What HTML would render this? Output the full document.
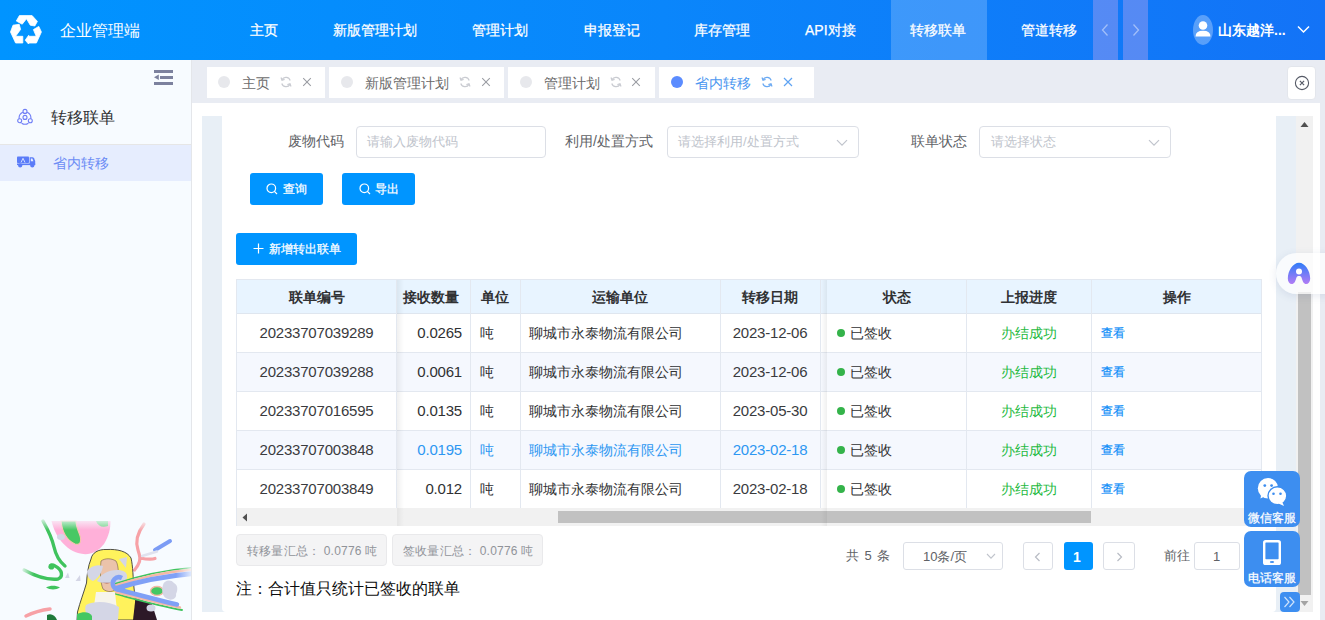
<!DOCTYPE html>
<html><head><meta charset="utf-8">
<style>
*{margin:0;padding:0;box-sizing:border-box}
html,body{width:1325px;height:620px;overflow:hidden;background:#e9ecf3;font-family:"Liberation Sans",sans-serif;color:#303133}
.a{position:absolute}
.t{position:absolute;white-space:nowrap;line-height:1}
#hdr{left:0;top:0;width:1325px;height:60px;background:linear-gradient(90deg,#0094ff 0%,#0a86fb 50%,#1373f7 100%)}
.nav{font-size:14px;color:#fff;top:23px;-webkit-text-stroke:0.25px #fff}
#side{left:0;top:60px;width:192px;height:560px;background:#f7fbff;border-right:1px solid #e4e6ea}
#tabs{left:192px;top:60px;width:1133px;height:43px;background:#e9ecf3}
.tab{position:absolute;top:67px;height:31px;background:#fff}
.tab .dot{position:absolute;top:9px;width:12px;height:12px;border-radius:50%;background:#e7e8ec}
.tab .tx{position:absolute;top:9px;font-size:14px;color:#6b6b6b;line-height:1;white-space:nowrap}
#content{left:192px;top:103px;width:1128px;height:517px;background:#fff}
#wrap{left:202px;top:116px;width:1094px;height:496px;background:#e8eff6}
#card{left:222px;top:116px;width:1054px;height:496px;background:#fff;border-radius:0 0 4px 4px}
.lbl{font-size:14px;color:#606266;top:134px}
.inp{position:absolute;top:126px;height:32px;border:1px solid #dcdfe6;border-radius:4px;background:#fff}
.ph{position:absolute;top:8px;font-size:13px;color:#c0c4cc;line-height:1;white-space:nowrap}
.num{font-size:15px;letter-spacing:-0.2px}
.cj{font-size:14px}
.btn{position:absolute;background:#0095ff;border-radius:3px;color:#fff}
.btn .t{-webkit-text-stroke:0.25px #fff}
</style></head><body>
<!-- HEADER -->
<div id="hdr" class="a">
<svg class="a" style="left:10px;top:14px" width="32" height="30" viewBox="0 0 32 30">
<g fill="#fff" stroke="#fff" stroke-width="0.8" stroke-linejoin="round">
<path d="M9.4 1.6 L22.1 1.6 L27.4 7.4 L24.8 12 L20.3 11.2 L16.5 4.8 L12.2 10.2 L6.3 7 Z"/>
<path d="M3 11.2 L9.2 10.3 L10.6 15.4 L5.6 22.3 L12.8 22.3 L12.8 29 L5.6 29 L0.5 18 Z"/>
<path d="M28.8 12.4 L31.4 18 L26.4 29 L18.7 29 L18.7 30.2 L15.2 26.2 L18.7 21.3 L18.7 22.3 L26.2 22.3 L23.4 15.6 Z"/>
</g>
</svg>
<div class="t" style="left:60px;top:23px;font-size:16px;color:#fff">企业管理端</div>
<div class="a" style="left:891px;top:0;width:96px;height:60px;background:rgba(255,255,255,0.2)"></div>
<div class="t nav" style="left:250px">主页</div>
<div class="t nav" style="left:333px">新版管理计划</div>
<div class="t nav" style="left:472px">管理计划</div>
<div class="t nav" style="left:584px">申报登记</div>
<div class="t nav" style="left:694px">库存管理</div>
<div class="t nav" style="left:805px">API对接</div>
<div class="t nav" style="left:910px">转移联单</div>
<div class="t nav" style="left:1021px">管道转移</div>
<div class="a" style="left:1093px;top:0;width:25px;height:60px;background:rgba(170,160,240,0.45)"></div>
<div class="a" style="left:1123px;top:0;width:25px;height:60px;background:rgba(170,160,240,0.45)"></div>
<svg class="a" style="left:1100px;top:23px" width="10" height="14" viewBox="0 0 10 14"><path d="M7.5 1.5 L2.5 7 L7.5 12.5" fill="none" stroke="rgba(255,255,255,0.45)" stroke-width="1.3"/></svg>
<svg class="a" style="left:1131px;top:23px" width="10" height="14" viewBox="0 0 10 14"><path d="M2.5 1.5 L7.5 7 L2.5 12.5" fill="none" stroke="rgba(255,255,255,0.45)" stroke-width="1.3"/></svg>
<svg class="a" style="left:1193px;top:15px" width="20" height="30" viewBox="0 0 20 30">
<ellipse cx="10" cy="15" rx="10" ry="15" fill="rgba(255,255,255,0.3)"/>
<circle cx="10" cy="10.5" r="4.3" fill="#fff"/>
<path d="M2.5 21.5 Q2.5 15.8 10 15.8 Q17.5 15.8 17.5 21.5 Z" fill="#fff"/>
</svg>
<div class="t" style="left:1218px;top:23px;font-size:14px;color:#fff;font-weight:bold">山东越洋...</div>
<svg class="a" style="left:1297px;top:25px" width="13" height="9" viewBox="0 0 13 9"><path d="M1 1.5 L6.5 7 L12 1.5" fill="none" stroke="#fff" stroke-width="1.5"/></svg>
</div>
<div id="side" class="a"></div>
<svg class="a" style="left:154px;top:69px" width="20" height="17" viewBox="0 0 20 17">
<g fill="#7c819e"><rect x="0" y="1" width="19" height="3"/><rect x="6" y="7" width="13" height="3"/><rect x="0" y="13" width="19" height="3"/><polygon points="0,8.3 4.8,5.6 4.8,11"/></g>
</svg>
<svg class="a" style="left:16px;top:108px" width="18" height="18" viewBox="0 0 18 18">
<g fill="none" stroke="#6f7ef6" stroke-width="1.1">
<path d="M6.8 4.2 A6.3 6.3 0 0 0 3.2 10.8 M11.2 4.2 A6.3 6.3 0 0 1 14.8 10.8 M5.6 15.2 A6.3 6.3 0 0 0 12.4 15.2"/>
<circle cx="9" cy="3.4" r="2"/><circle cx="3.7" cy="12.8" r="2"/><circle cx="14.3" cy="12.8" r="2"/><circle cx="9" cy="9.4" r="2"/>
</g></svg>
<div class="t" style="left:51px;top:110px;font-size:16px;color:#303133">转移联单</div>
<div class="a" style="left:0;top:144px;width:191px;height:1px;background:#e6e6e6"></div>
<div class="a" style="left:0;top:145px;width:191px;height:36px;background:#e6edfe"></div>
<svg class="a" style="left:17px;top:156px" width="19" height="12" viewBox="0 0 19 12">
<g fill="#5b7cf8"><rect x="0" y="0.5" width="12" height="6.5" rx="0.8"/><path d="M12.6 1.2 L15.5 1.2 Q16.5 1.2 17 2.2 L18.2 5 L18.2 8.6 L12.6 8.6 Z"/><rect x="0" y="7.5" width="18.2" height="1.6"/><circle cx="3.2" cy="9.4" r="2.1"/><circle cx="15.3" cy="9.4" r="2.1"/></g>
<path d="M4 6.5 L6 2.3 L8 6.5" fill="none" stroke="#dfe6ff" stroke-width="0.9"/>
<path d="M13.8 2.6 L15.4 2.6 L16.4 5.2 L13.8 5.2 Z" fill="#e6edfe"/>
</svg>
<div class="t" style="left:53px;top:156px;font-size:14px;color:#6c8cf5">省内转移</div>
<div id="tabs" class="a"></div>
<div class="tab" style="left:207px;width:118px"><div class="dot" style="left:11px"></div><div class="tx" style="left:35px">主页</div>
<svg class="a" style="left:73px;top:9px" width="12" height="12" viewBox="0 0 12 12"><path d="M10.2 4.5 A4.5 4.5 0 0 0 2 3.6 M1.8 7.5 A4.5 4.5 0 0 0 10 8.4" fill="none" stroke="#c9cbd1" stroke-width="1.2"/><path d="M1 1.5 L2 4.2 L4.6 3.4 M11 10.5 L10 7.8 L7.4 8.6" fill="none" stroke="#c9cbd1" stroke-width="1.2"/></svg>
<svg class="a" style="left:95px;top:10px" width="10" height="10" viewBox="0 0 10 10"><path d="M1.2 1.2 L8.8 8.8 M8.8 1.2 L1.2 8.8" stroke="#9a9ca2" stroke-width="1.05"/></svg></div>
<div class="tab" style="left:329px;width:175px"><div class="dot" style="left:12px"></div><div class="tx" style="left:36px">新版管理计划</div>
<svg class="a" style="left:130px;top:9px" width="12" height="12" viewBox="0 0 12 12"><path d="M10.2 4.5 A4.5 4.5 0 0 0 2 3.6 M1.8 7.5 A4.5 4.5 0 0 0 10 8.4" fill="none" stroke="#c9cbd1" stroke-width="1.2"/><path d="M1 1.5 L2 4.2 L4.6 3.4 M11 10.5 L10 7.8 L7.4 8.6" fill="none" stroke="#c9cbd1" stroke-width="1.2"/></svg>
<svg class="a" style="left:152px;top:10px" width="10" height="10" viewBox="0 0 10 10"><path d="M1.2 1.2 L8.8 8.8 M8.8 1.2 L1.2 8.8" stroke="#9a9ca2" stroke-width="1.05"/></svg></div>
<div class="tab" style="left:508px;width:147px"><div class="dot" style="left:12px"></div><div class="tx" style="left:36px">管理计划</div>
<svg class="a" style="left:102px;top:9px" width="12" height="12" viewBox="0 0 12 12"><path d="M10.2 4.5 A4.5 4.5 0 0 0 2 3.6 M1.8 7.5 A4.5 4.5 0 0 0 10 8.4" fill="none" stroke="#c9cbd1" stroke-width="1.2"/><path d="M1 1.5 L2 4.2 L4.6 3.4 M11 10.5 L10 7.8 L7.4 8.6" fill="none" stroke="#c9cbd1" stroke-width="1.2"/></svg>
<svg class="a" style="left:123px;top:10px" width="10" height="10" viewBox="0 0 10 10"><path d="M1.2 1.2 L8.8 8.8 M8.8 1.2 L1.2 8.8" stroke="#9a9ca2" stroke-width="1.05"/></svg></div>
<div class="tab" style="left:659px;width:155px"><div class="dot" style="left:12px;background:#5b8cff"></div><div class="tx" style="left:36px;color:#4c97f0">省内转移</div>
<svg class="a" style="left:102px;top:9px" width="12" height="12" viewBox="0 0 12 12"><path d="M10.2 4.5 A4.5 4.5 0 0 0 2 3.6 M1.8 7.5 A4.5 4.5 0 0 0 10 8.4" fill="none" stroke="#6aa9f2" stroke-width="1.2"/><path d="M1 1.5 L2 4.2 L4.6 3.4 M11 10.5 L10 7.8 L7.4 8.6" fill="none" stroke="#6aa9f2" stroke-width="1.2"/></svg>
<svg class="a" style="left:124px;top:10px" width="10" height="10" viewBox="0 0 10 10"><path d="M1 1 L9 9 M9 1 L1 9" stroke="#5ea3f3" stroke-width="1.2"/></svg></div>
<div class="a" style="left:1287px;top:66px;width:29px;height:34px;background:#fff;border-radius:4px;border:1px solid #e3e6ec"></div>
<svg class="a" style="left:1294px;top:75px" width="16" height="16" viewBox="0 0 16 16"><circle cx="8" cy="8" r="6.6" fill="none" stroke="#555a66" stroke-width="1.1"/><path d="M5.9 5.9 L10.1 10.1 M10.1 5.9 L5.9 10.1" stroke="#555a66" stroke-width="1.2"/></svg>
<div id="content" class="a"></div>
<div id="wrap" class="a"></div>
<div id="card" class="a"></div>
<div class="t lbl" style="left:288px">废物代码</div>
<div class="inp" style="left:356px;width:190px"><div class="ph" style="left:10px">请输入废物代码</div></div>
<div class="t lbl" style="left:565px">利用/处置方式</div>
<div class="inp" style="left:667px;width:192px"><div class="ph" style="left:10px">请选择利用/处置方式</div>
<svg class="a" style="left:168px;top:12px" width="12" height="8" viewBox="0 0 12 8"><path d="M1 1.2 L6 6.2 L11 1.2" fill="none" stroke="#c0c4cc" stroke-width="1.2"/></svg></div>
<div class="t lbl" style="left:911px">联单状态</div>
<div class="inp" style="left:979px;width:192px"><div class="ph" style="left:11px">请选择状态</div>
<svg class="a" style="left:168px;top:12px" width="12" height="8" viewBox="0 0 12 8"><path d="M1 1.2 L6 6.2 L11 1.2" fill="none" stroke="#c0c4cc" stroke-width="1.2"/></svg></div>
<div class="btn" style="left:250px;top:173px;width:73px;height:32px"><svg class="a" style="left:16px;top:10px" width="12" height="12" viewBox="0 0 12 12"><circle cx="5.3" cy="5.3" r="4.3" fill="none" stroke="#fff" stroke-width="1.2"/><path d="M8.4 8.4 L11 11" stroke="#fff" stroke-width="1.2"/></svg><div class="t" style="left:33px;top:10px;font-size:12px">查询</div></div>
<div class="btn" style="left:342px;top:173px;width:73px;height:32px"><svg class="a" style="left:17px;top:10px" width="12" height="12" viewBox="0 0 12 12"><circle cx="5.3" cy="5.3" r="4.3" fill="none" stroke="#fff" stroke-width="1.2"/><path d="M8.4 8.4 L11 11" stroke="#fff" stroke-width="1.2"/></svg><div class="t" style="left:33px;top:10px;font-size:12px">导出</div></div>
<div class="btn" style="left:236px;top:233px;width:121px;height:32px"><svg class="a" style="left:17px;top:10px" width="11" height="11" viewBox="0 0 11 11"><path d="M5.5 0.5 L5.5 10.5 M0.5 5.5 L10.5 5.5" stroke="#fff" stroke-width="1.2"/></svg><div class="t" style="left:33px;top:10px;font-size:12px">新增转出联单</div></div>
<!-- TABLE -->
<div class="a" style="left:236px;top:279px;width:1026px;height:247px;background:#fff;border:1px solid #e3e8f0;border-bottom:none"></div>
<div class="a" style="left:237px;top:280px;width:1024px;height:33px;background:#e8f4ff"></div>
<div class="a" style="left:237px;top:313px;width:1024px;height:1px;background:#dfe6ef"></div>
<div class="a" style="left:237px;top:352px;width:1024px;height:1px;background:#e3e8f0"></div>
<div class="a" style="left:237px;top:353px;width:1024px;height:38px;background:#f5f8fe"></div>
<div class="a" style="left:237px;top:391px;width:1024px;height:1px;background:#e3e8f0"></div>
<div class="a" style="left:237px;top:430px;width:1024px;height:1px;background:#e3e8f0"></div>
<div class="a" style="left:237px;top:431px;width:1024px;height:38px;background:#f5f8fe"></div>
<div class="a" style="left:237px;top:469px;width:1024px;height:1px;background:#e3e8f0"></div>
<div class="a" style="left:237px;top:508px;width:1024px;height:1px;background:#e3e8f0"></div>
<div class="a" style="left:396px;top:280px;width:1px;height:228px;background:#e3e8f0"></div>
<div class="a" style="left:470px;top:280px;width:1px;height:228px;background:#e3e8f0"></div>
<div class="a" style="left:520px;top:280px;width:1px;height:228px;background:#e3e8f0"></div>
<div class="a" style="left:720px;top:280px;width:1px;height:228px;background:#e3e8f0"></div>
<div class="a" style="left:820px;top:280px;width:1px;height:228px;background:#e3e8f0"></div>
<div class="a" style="left:966px;top:280px;width:1px;height:228px;background:#e3e8f0"></div>
<div class="a" style="left:1091px;top:280px;width:1px;height:228px;background:#e3e8f0"></div>
<div class="a" style="left:397px;top:280px;width:7px;height:246px;background:linear-gradient(90deg,rgba(0,0,0,0.06),rgba(0,0,0,0))"></div>
<div class="a" style="left:821px;top:280px;width:6px;height:246px;background:linear-gradient(90deg,rgba(0,0,0,0),rgba(0,0,0,0.06))"></div>
<div class="t" style="font-size:14px;font-weight:bold;color:#303133;top:290px;left:316.5px;transform:translateX(-50%)">联单编号</div>
<div class="t" style="font-size:14px;font-weight:bold;color:#303133;top:290px;left:403px">接收数量</div>
<div class="t" style="font-size:14px;font-weight:bold;color:#303133;top:290px;left:481px">单位</div>
<div class="t" style="font-size:14px;font-weight:bold;color:#303133;top:290px;left:620px;transform:translateX(-50%)">运输单位</div>
<div class="t" style="font-size:14px;font-weight:bold;color:#303133;top:290px;left:770px;transform:translateX(-50%)">转移日期</div>
<div class="t" style="font-size:14px;font-weight:bold;color:#303133;top:290px;left:896.5px;transform:translateX(-50%)">状态</div>
<div class="t" style="font-size:14px;font-weight:bold;color:#303133;top:290px;left:1028.5px;transform:translateX(-50%)">上报进度</div>
<div class="t" style="font-size:14px;font-weight:bold;color:#303133;top:290px;left:1176.5px;transform:translateX(-50%)">操作</div>
<div class="t num" style="left:316.5px;top:325px;transform:translateX(-50%);color:#3a3b3e">20233707039289</div>
<div class="t num" style="right:863px;top:325px;color:#303133">0.0265</div>
<div class="t cj" style="left:480px;top:326px;color:#303133">吨</div>
<div class="t cj" style="left:529px;top:326px;color:#303133">聊城市永泰物流有限公司</div>
<div class="t num" style="left:770px;top:325px;transform:translateX(-50%);color:#3a3b3e">2023-12-06</div>
<div class="a" style="left:837px;top:329px;width:8px;height:8px;border-radius:50%;background:#34b34a"></div>
<div class="t cj" style="left:850px;top:326px;color:#303133">已签收</div>
<div class="t cj" style="left:1001px;top:326px;color:#1fba42">办结成功</div>
<div class="t" style="left:1101px;top:327px;font-size:12px;color:#0a8cf8;-webkit-text-stroke:0.2px #0a8cf8">查看</div>
<div class="t num" style="left:316.5px;top:364px;transform:translateX(-50%);color:#3a3b3e">20233707039288</div>
<div class="t num" style="right:863px;top:364px;color:#303133">0.0061</div>
<div class="t cj" style="left:480px;top:365px;color:#303133">吨</div>
<div class="t cj" style="left:529px;top:365px;color:#303133">聊城市永泰物流有限公司</div>
<div class="t num" style="left:770px;top:364px;transform:translateX(-50%);color:#3a3b3e">2023-12-06</div>
<div class="a" style="left:837px;top:368px;width:8px;height:8px;border-radius:50%;background:#34b34a"></div>
<div class="t cj" style="left:850px;top:365px;color:#303133">已签收</div>
<div class="t cj" style="left:1001px;top:365px;color:#1fba42">办结成功</div>
<div class="t" style="left:1101px;top:366px;font-size:12px;color:#0a8cf8;-webkit-text-stroke:0.2px #0a8cf8">查看</div>
<div class="t num" style="left:316.5px;top:403px;transform:translateX(-50%);color:#3a3b3e">20233707016595</div>
<div class="t num" style="right:863px;top:403px;color:#303133">0.0135</div>
<div class="t cj" style="left:480px;top:404px;color:#303133">吨</div>
<div class="t cj" style="left:529px;top:404px;color:#303133">聊城市永泰物流有限公司</div>
<div class="t num" style="left:770px;top:403px;transform:translateX(-50%);color:#3a3b3e">2023-05-30</div>
<div class="a" style="left:837px;top:407px;width:8px;height:8px;border-radius:50%;background:#34b34a"></div>
<div class="t cj" style="left:850px;top:404px;color:#303133">已签收</div>
<div class="t cj" style="left:1001px;top:404px;color:#1fba42">办结成功</div>
<div class="t" style="left:1101px;top:405px;font-size:12px;color:#0a8cf8;-webkit-text-stroke:0.2px #0a8cf8">查看</div>
<div class="t num" style="left:316.5px;top:442px;transform:translateX(-50%);color:#3a3b3e">20233707003848</div>
<div class="t num" style="right:863px;top:442px;color:#2d97f2">0.0195</div>
<div class="t cj" style="left:480px;top:443px;color:#2d97f2">吨</div>
<div class="t cj" style="left:529px;top:443px;color:#2d97f2">聊城市永泰物流有限公司</div>
<div class="t num" style="left:770px;top:442px;transform:translateX(-50%);color:#2d97f2">2023-02-18</div>
<div class="a" style="left:837px;top:446px;width:8px;height:8px;border-radius:50%;background:#34b34a"></div>
<div class="t cj" style="left:850px;top:443px;color:#303133">已签收</div>
<div class="t cj" style="left:1001px;top:443px;color:#1fba42">办结成功</div>
<div class="t" style="left:1101px;top:444px;font-size:12px;color:#0a8cf8;-webkit-text-stroke:0.2px #0a8cf8">查看</div>
<div class="t num" style="left:316.5px;top:481px;transform:translateX(-50%);color:#3a3b3e">20233707003849</div>
<div class="t num" style="right:863px;top:481px;color:#303133">0.012</div>
<div class="t cj" style="left:480px;top:482px;color:#303133">吨</div>
<div class="t cj" style="left:529px;top:482px;color:#303133">聊城市永泰物流有限公司</div>
<div class="t num" style="left:770px;top:481px;transform:translateX(-50%);color:#3a3b3e">2023-02-18</div>
<div class="a" style="left:837px;top:485px;width:8px;height:8px;border-radius:50%;background:#34b34a"></div>
<div class="t cj" style="left:850px;top:482px;color:#303133">已签收</div>
<div class="t cj" style="left:1001px;top:482px;color:#1fba42">办结成功</div>
<div class="t" style="left:1101px;top:483px;font-size:12px;color:#0a8cf8;-webkit-text-stroke:0.2px #0a8cf8">查看</div>
<div class="a" style="left:237px;top:508px;width:1024px;height:18px;background:#f1f1f1"></div>
<div class="a" style="left:558px;top:511px;width:533px;height:12px;background:#c1c1c1"></div>
<svg class="a" style="left:242px;top:513px" width="6" height="9" viewBox="0 0 6 9"><polygon points="5,0.5 0.5,4.5 5,8.5" fill="#505050"/></svg>
<div class="a" style="left:397px;top:508px;width:7px;height:18px;background:linear-gradient(90deg,rgba(0,0,0,0.05),rgba(0,0,0,0))"></div>
<div class="a" style="left:821px;top:508px;width:6px;height:18px;background:linear-gradient(90deg,rgba(0,0,0,0),rgba(0,0,0,0.05))"></div>
<!-- /TABLE -->
<!-- FOOT -->
<div class="a" style="left:236px;top:534px;width:151px;height:32px;background:#f4f4f5;border:1px solid #e9e9eb;border-radius:4px"></div>
<div class="t" style="left:247px;top:545px;font-size:12px;letter-spacing:0.2px;color:#909399">转移量汇总： 0.0776 吨</div>
<div class="a" style="left:392px;top:534px;width:151px;height:32px;background:#f4f4f5;border:1px solid #e9e9eb;border-radius:4px"></div>
<div class="t" style="left:403px;top:545px;font-size:12px;letter-spacing:0.2px;color:#909399">签收量汇总： 0.0776 吨</div>
<div class="t" style="left:236px;top:581px;font-size:16px;color:#0d0d0d">注：合计值只统计已签收的联单</div>
<div class="t" style="left:846px;top:549px;font-size:13px;word-spacing:2px;color:#606266">共 5 条</div>
<div class="a" style="left:903px;top:542px;width:100px;height:28px;border:1px solid #dcdfe6;border-radius:3px;background:#fff"></div>
<div class="t" style="left:923px;top:550px;font-size:13px;color:#606266">10条/页</div>
<svg class="a" style="left:986px;top:553px" width="10" height="7" viewBox="0 0 10 7"><path d="M1 1 L5 5.2 L9 1" fill="none" stroke="#c0c4cc" stroke-width="1.1"/></svg>
<div class="a" style="left:1023px;top:542px;width:30px;height:28px;border:1px solid #dcdfe6;border-radius:3px;background:#fff"></div>
<svg class="a" style="left:1034px;top:552px" width="7" height="10" viewBox="0 0 7 10"><path d="M5.5 1 L1.5 5 L5.5 9" fill="none" stroke="#b8bcc4" stroke-width="1.2"/></svg>
<div class="a" style="left:1064px;top:542px;width:29px;height:28px;border-radius:3px;background:#0095ff"></div>
<div class="t" style="left:1073px;top:550px;font-size:14px;font-weight:bold;color:#fff">1</div>
<div class="a" style="left:1103px;top:542px;width:32px;height:28px;border:1px solid #dcdfe6;border-radius:3px;background:#fff"></div>
<svg class="a" style="left:1116px;top:552px" width="7" height="10" viewBox="0 0 7 10"><path d="M1.5 1 L5.5 5 L1.5 9" fill="none" stroke="#b8bcc4" stroke-width="1.2"/></svg>
<div class="t" style="left:1164px;top:549px;font-size:13px;color:#606266">前往</div>
<div class="a" style="left:1194px;top:542px;width:46px;height:28px;border:1px solid #dcdfe6;border-radius:3px;background:#fff"></div>
<div class="t" style="left:1213px;top:550px;font-size:13px;color:#606266">1</div>
<!-- /FOOT -->
<!-- WIDGETS -->
<div class="a" style="left:1296px;top:116px;width:17px;height:496px;background:#f1f1f1"></div>
<div class="a" style="left:1298px;top:292px;width:13px;height:303px;background:#c1c1c1"></div>
<svg class="a" style="left:1300px;top:121px" width="9" height="7" viewBox="0 0 9 7"><polygon points="4.5,1 8.5,6 0.5,6" fill="#505050"/></svg>
<svg class="a" style="left:1300px;top:600px" width="9" height="7" viewBox="0 0 9 7"><polygon points="0.5,1 8.5,1 4.5,6" fill="#a3a3a3"/></svg>
<div class="a" style="left:1276px;top:253px;width:70px;height:41px;border-radius:20.5px;background:rgba(255,255,255,0.72);box-shadow:0 2px 8px rgba(60,80,140,0.12)"></div>
<svg class="a" style="left:1287px;top:262px" width="24" height="23" viewBox="0 0 24 23">
<defs><linearGradient id="ag" x1="0" y1="0" x2="0" y2="1"><stop offset="0" stop-color="#2f7cf8"/><stop offset="1" stop-color="#b27cf5"/></linearGradient></defs>
<path d="M12 0.8 C6 0.8 0.8 9 0.8 16.5 C0.8 20 2.6 22 4.8 22 C7.3 22 8.2 19.5 9 17 L9.6 15.2 C10.2 13.6 13.8 13.6 14.4 15.2 L15 17 C15.8 19.5 16.7 22 19.2 22 C21.4 22 23.2 20 23.2 16.5 C23.2 9 18 0.8 12 0.8 Z" fill="url(#ag)"/>
<circle cx="12" cy="9.6" r="3" fill="#fff"/>
</svg>
<div class="a" style="left:1244px;top:471px;width:56px;height:56px;border-radius:7px;background:#3d8ef0"></div>
<svg class="a" style="left:1257px;top:477px" width="31" height="30" viewBox="0 0 31 30">
<ellipse cx="11" cy="11.2" rx="10.2" ry="10.2" fill="#fff"/>
<path d="M4.5 16 L3.5 21.5 L9.5 18.5 Z" fill="#fff"/>
<ellipse cx="20.4" cy="18.8" rx="9.4" ry="9" fill="#fff" stroke="#3d8ef0" stroke-width="1.4"/>
<path d="M25 24.5 L27 29 L21.5 26.5 Z" fill="#fff"/>
<circle cx="7.8" cy="8.6" r="1.4" fill="#3d8ef0"/><circle cx="14.6" cy="8.6" r="1.4" fill="#3d8ef0"/>
<circle cx="16.5" cy="16.8" r="1.3" fill="#3d8ef0"/><circle cx="23.5" cy="16.8" r="1.3" fill="#3d8ef0"/>
</svg>
<div class="t" style="left:1248px;top:512px;font-size:12px;color:#fff;-webkit-text-stroke:0.25px #fff">微信客服</div>
<div class="a" style="left:1244px;top:531px;width:56px;height:56px;border-radius:7px;background:#3d8ef0"></div>
<svg class="a" style="left:1263px;top:540px" width="18" height="25" viewBox="0 0 18 25">
<rect x="0" y="0" width="18" height="25" rx="2.6" fill="#fff"/>
<rect x="2.4" y="2.4" width="13.2" height="16.8" rx="0.6" fill="#3d8ef0"/>
<ellipse cx="9" cy="22" rx="2.2" ry="0.9" fill="#3d8ef0"/>
</svg>
<div class="t" style="left:1248px;top:572px;font-size:12px;color:#fff;-webkit-text-stroke:0.25px #fff">电话客服</div>
<div class="a" style="left:1280px;top:592px;width:20px;height:20px;border-radius:4px;background:#3d8ef0"></div>
<svg class="a" style="left:1283px;top:596px" width="14" height="12" viewBox="0 0 14 12"><path d="M1.5 1 L6 6 L1.5 11 M6.5 1 L11 6 L6.5 11" fill="none" stroke="rgba(255,255,255,0.75)" stroke-width="1.2"/></svg>
<!-- /WIDGETS -->
<!-- ILLUS -->
<svg class="a" style="left:0;top:500px" width="191" height="120" viewBox="0 500 191 120">
<defs>
<linearGradient id="fadeT" x1="0" y1="0" x2="0" y2="1"><stop offset="0" stop-color="#f7fbff" stop-opacity="1"/><stop offset="1" stop-color="#f7fbff" stop-opacity="0"/></linearGradient>
<linearGradient id="fadeL" x1="0" y1="0" x2="1" y2="0"><stop offset="0" stop-color="#f7fbff" stop-opacity="1"/><stop offset="1" stop-color="#f7fbff" stop-opacity="0"/></linearGradient>
<linearGradient id="fadeR" x1="0" y1="0" x2="1" y2="0"><stop offset="0" stop-color="#f7fbff" stop-opacity="0"/><stop offset="1" stop-color="#f7fbff" stop-opacity="0.85"/></linearGradient>
</defs>
<!-- pink bowl -->
<path d="M51.5 521 C54 532 62 548 78 553 C88 556 97 553 104 544 C109 536 110.5 528 110.5 521 Z" fill="#ffb0d9"/>
<path d="M61 521 C62 530 66 540 75 544 C81 546 82 540 79 533 C77 528 76 524 76 521 Z" fill="#48c864" stroke="#f6c5ae" stroke-width="1.1"/>
<path d="M96 521 C98 526 102 528 108 526 L108 521 Z" fill="#6fd186"/>
<path d="M43 521 C48 530 52 538 54 547 C56 556 60 562 65 566" fill="none" stroke="#3fc35d" stroke-width="3.4" stroke-linecap="round"/>
<ellipse cx="61" cy="537" rx="4" ry="3" fill="#d4d6e6"/>
<rect x="38" y="517" width="76" height="13" fill="url(#fadeT)"/>
<!-- green loop left -->
<path d="M24 570 C35 576 48 580 58 579 C63 577 63 570 55 566 C52 564 50 565 50 567" fill="none" stroke="#3fc35d" stroke-width="3.4" stroke-linecap="round"/>
<circle cx="51.5" cy="567" r="2.6" fill="#3fc35d"/>
<rect x="20" y="564" width="14" height="12" fill="url(#fadeL)"/>
<path d="M46 587.5 C50 585 56 585 60 587.5 C56 590 50 590 46 587.5 Z" fill="#3fc35d"/>
<path d="M65 578 L68 572.5 L69.5 578 Z M75.5 581 L80 575 L80.5 581 Z" fill="#d4d6e6"/>
<!-- pink streak right -->
<path d="M144 524 C138 532 135 541 138 550 C140 556 141 560 138 565 C137 567 135.5 568.5 134.6 570 M140 558 C145 559 151 560 155 558.5" fill="none" stroke="#f7a1a6" stroke-width="3.2" stroke-linecap="round"/>
<rect x="132" y="519" width="18" height="12" fill="url(#fadeT)"/>
<path d="M155 550 L170 541" stroke="#7c9cf5" stroke-width="4" stroke-linecap="round"/>
<path d="M142 556 L157 551.5" stroke="#e0e2ee" stroke-width="2.4" stroke-linecap="round"/>
<!-- hair -->
<path d="M107 549.5 C98 549 92 553 91 559 C88 566 87 575 86.5 583 C84 592 80 602 77.5 612 L77 620 L138 620 C137 610 135 598 134 588 C133 578 133 566 131 558 C127 551 117 549 107 549.5 Z" fill="#fff25c" stroke="#3a3a3a" stroke-width="0.9"/>
<path d="M101 561 C100 570 100 582 103 589 C108 593 114 592 117 588 C119 578 119 566 116 561 C111 558 105 558 101 561 Z" fill="#ebc3aa" stroke="#5a4040" stroke-width="0.5"/>
<path d="M101 581 C105 583 109 583 112 581" stroke="#a55a50" stroke-width="1.6" fill="none"/>
<path d="M96 592 L115 592 L118 620 L92 620 Z" fill="#f6f4ec"/>
<path d="M135.5 598 L152 604 L157 620 L133 620 Z" fill="#2d1928"/>
<path d="M87 571 C91 566 97 564 103 566 C102 572 99 578 93 581 C90 580 87 577 87 571 Z" fill="#d4d6e6"/>
<path d="M97 581 C101 574 108 570 117 570 C123 570 128 572 127 578 C125 582 120 584 114 583 C108 582 102 584 97 581 Z" fill="#d4d6e6"/>
<path d="M119 559 L127 557 L126 568 Z" fill="#d4d6e6"/>
<path d="M86 605 C96 600 110 602 119 607 L118 620 L90 620 C86 614 84 610 86 605 Z" fill="#d4d6e6"/>
<!-- swoosh -->
<path d="M114 584 C135 577 162 570 194 567.5" fill="none" stroke="#3fc35d" stroke-width="1.6"/>
<path d="M114 586 C135 579 162 572 194 569.5" fill="none" stroke="#f5b8a6" stroke-width="2.4"/>
<path d="M114 589 C135 582.5 162 576 194 573.5" fill="none" stroke="#7fa0f6" stroke-width="5"/>
<path d="M116 594 C135 599 158 605.5 182 610" fill="none" stroke="#3fc35d" stroke-width="1.8" stroke-linecap="round"/>
<path d="M116 592 C135 597 158 603 180 607.5" fill="none" stroke="#f5b8a6" stroke-width="2.4" stroke-linecap="round"/>
<path d="M116 589 C135 594 158 600 177 604.5" fill="none" stroke="#7fa0f6" stroke-width="4.5" stroke-linecap="round"/>
<rect x="176" y="564" width="16" height="14" fill="url(#fadeR)"/>
<path d="M122 578 C116 575 111 581 113.5 586.5 C116 591 122 590 124 586" fill="none" stroke="#7fa0f6" stroke-width="4.5"/>
<ellipse cx="157" cy="591" rx="6.5" ry="4.5" fill="#44c762" stroke="#f5b8a6" stroke-width="1.4"/>
<path d="M163 585 C164 580 171 579 174 583 C178 585 178 590 176 594 C177 598 172 601 168 599 C163 598 161 591 163 585 Z" fill="#d4d6e6"/>
<ellipse cx="151" cy="608" rx="4.5" ry="3.5" fill="#d4d6e6"/>
<!-- bottom bits -->
<path d="M26 616 C34 612 42 610 50 609" stroke="#f7a1a6" stroke-width="3.5" stroke-linecap="round" fill="none"/>
<path d="M47 615 C51 613 55 615 57 620 L47 620 Z" fill="#1e7a3a"/>
<path d="M77 614 C84 611 90 612 92 616 L92 620 L77 620 Z" fill="#44c762"/>
</svg>
<!-- /ILLUS -->
</body></html>
